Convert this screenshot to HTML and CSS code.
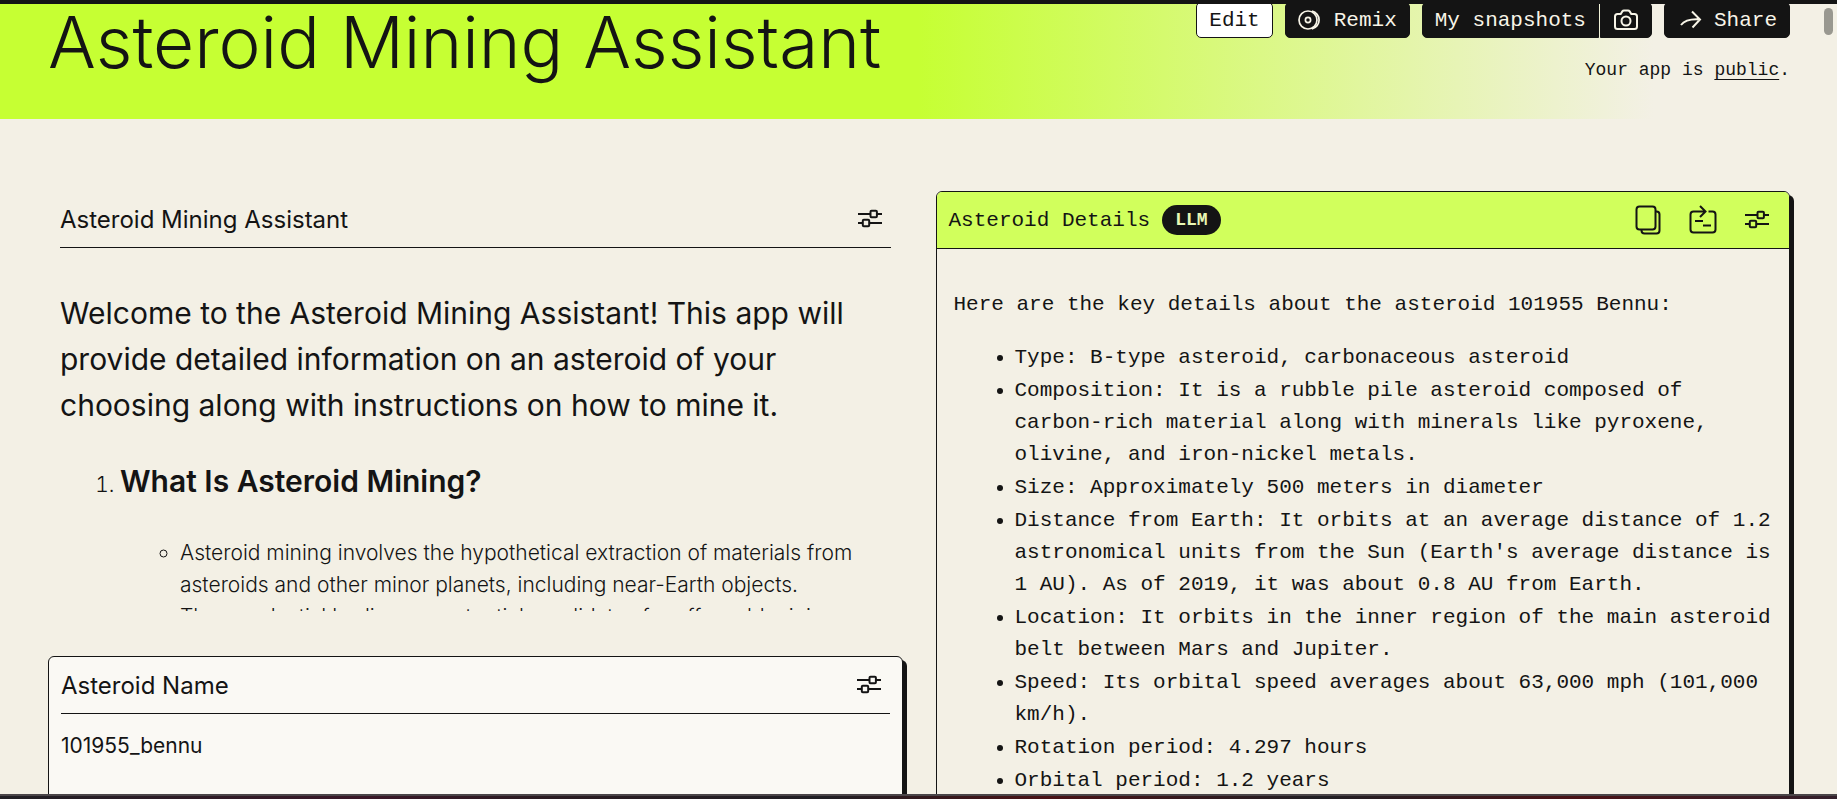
FILE: index.html
```html
<!DOCTYPE html>
<html lang="en">
<head>
    <meta charset="UTF-8">
    <meta name="viewport" content="width=device-width, initial-scale=1.0">
    <title>Asteroid Mining Assistant</title>
    <link rel="stylesheet" href="styles.css">
</head>
<body>
    <svg class="sprite" aria-hidden="true">
        <symbol id="sliders" viewBox="0 0 24 20">
            <path d="M0 5h12M19 5h5M0 14h5M11 14h13"/>
            <rect x="12.5" y="1.7" width="6.4" height="6.6" rx="1"/>
            <rect x="4.8" y="10.7" width="6.4" height="6.6" rx="1"/>
        </symbol>
    </svg>

    <div class="top-bar"></div>
    <div class="app">
        <header class="app-header">
            <h1>Asteroid Mining Assistant</h1>
            <div class="header-side">
                <div class="actions">
                    <button class="btn btn-light">Edit</button>
                    <button class="btn">
                        <svg class="thin" width="24" height="20" viewBox="0 0 24 20"><circle cx="10" cy="10" r="9"/><circle cx="10" cy="10" r="2.600"/><path d="M14 1.200a9 9 0 0 1 0 17.600"/></svg>
                        Remix
                    </button>
                    <div class="btn-group">
                        <button class="btn">My snapshots</button>
                        <button class="btn" aria-label="Take snapshot">
                            <svg width="24" height="22" viewBox="0 0 24 22"><path d="M3.500 5h3.200l1.600-2.600Q8.900 1.500 10 1.500h4q1.100 0 1.700.9L17.300 5h3.200Q23 5 23 7.500v10q0 2.500-2.500 2.500h-17Q1 20 1 17.500v-10Q1 5 3.500 5z"/><circle cx="12" cy="12" r="4.500"/></svg>
                        </button>
                    </div>
                    <button class="btn btn-share">
                        <svg width="22" height="20" viewBox="0 0 22 20"><path d="M1 15Q6 8.500 20 9.500M12 1.500l8 8-7.500 8"/></svg>
                        Share
                    </button>
                </div>
                <p class="visibility">Your app is <a href="#">public</a>.</p>
            </div>
        </header>

        <main class="columns">
            <div class="column">
                <section class="panel">
                    <div class="panel-header">
                        <h2>Asteroid Mining Assistant</h2>
                        <button class="icon-btn" aria-label="Settings"><svg width="24" height="20"><use href="#sliders"/></svg></button>
                    </div>
                    <div class="panel-body">
                        <p class="intro">Welcome to the Asteroid Mining Assistant! This app will provide detailed information on an asteroid of your choosing along with instructions on how to mine it.</p>
                        <ol>
                            <li>
                                <h3>What Is Asteroid Mining?</h3>
                                <ul>
                                    <li>Asteroid mining involves the hypothetical extraction of materials from asteroids and other minor planets, including near-Earth objects.</li>
                                    <li>These celestial bodies are potential candidates for off-world mining.</li>
                                </ul>
                            </li>
                        </ol>
                    </div>
                </section>

                <section class="card">
                    <div class="panel-header">
                        <h2><label for="asteroidName">Asteroid Name</label></h2>
                        <button class="icon-btn" aria-label="Settings"><svg width="24" height="20"><use href="#sliders"/></svg></button>
                    </div>
                    <input type="text" id="asteroidName" value="101955_bennu">
                </section>
            </div>

            <section class="details">
                <div class="details-header">
                    <h2>Asteroid Details</h2>
                    <span class="badge">LLM</span>
                    <div class="details-tools">
                        <button class="icon-btn" aria-label="Copy">
                            <svg width="26" height="30" viewBox="0 0 26 30"><rect x="1.500" y="1.500" width="19" height="23" rx="3"/><path d="M20.500 6.500h1q3 0 3 3v16q0 3-3 3H9.500q-3 0-3-3v-1"/></svg>
                        </button>
                        <button class="icon-btn" aria-label="Run step">
                            <svg width="28" height="30" viewBox="0 0 28 30"><path d="M19.500 6.500h4q3 0 3 3v15q0 3-3 3h-19q-3 0-3-3v-15q0-3 3-3h12M11 1l5.500 5.500L11 12M6 16h8M14 20.500h8"/></svg>
                        </button>
                        <button class="icon-btn" aria-label="Settings"><svg width="24" height="20"><use href="#sliders"/></svg></button>
                    </div>
                </div>
                <div class="details-body">
                    <p>Here are the key details about the asteroid 101955 Bennu:</p>
                    <ul>
                        <li>Type: B-type asteroid, carbonaceous asteroid</li>
                        <li>Composition: It is a rubble pile asteroid composed of carbon-rich material along with minerals like pyroxene, olivine, and iron-nickel metals.</li>
                        <li>Size: Approximately 500 meters in diameter</li>
                        <li>Distance from Earth: It orbits at an average distance of 1.2 astronomical units from the Sun (Earth's average distance is 1 AU). As of 2019, it was about 0.8 AU from Earth.</li>
                        <li>Location: It orbits in the inner region of the main asteroid belt between Mars and Jupiter.</li>
                        <li>Speed: Its orbital speed averages about 63,000 mph (101,000 km/h).</li>
                        <li>Rotation period: 4.297 hours</li>
                        <li>Orbital period: 1.2 years</li>
                    </ul>
                </div>
            </section>
        </main>
        <div class="scroll-thumb"></div>
    </div>
    <div class="bottom-bar"></div>
</body>
</html>
```

FILE: styles.css
```css
* {
    box-sizing: border-box;
}
body {
    margin: 0;
    height: 100vh;
    display: flex;
    flex-direction: column;
    overflow: hidden;
    font-family: Inter, sans-serif;
    font-size: 21px;
    color: #141414;
    background-color: #f3f0e5;
}
h1, h2, h3, p {
    margin: 0;
}
svg {
    display: block;
    fill: none;
    stroke: currentColor;
    stroke-width: 2;
}
svg.thin {
    stroke-width: 1.7;
}
.sprite {
    position: absolute;
    width: 0;
    height: 0;
}
button {
    font: inherit;
    color: inherit;
    cursor: pointer;
}
.top-bar {
    flex: none;
    height: 4px;
    background-color: #141414;
}
.bottom-bar {
    flex: none;
    height: 5px;
    border-top: 2px solid #4a4548;
    background: linear-gradient(90deg, #201f24, #3a1828 20%, #2a1c22 30%, #201f24 45%, #4a1216 57%, #201f24 72%, #4a1216 86%, #33202c);
}
.app {
    position: relative;
    flex: 1;
    min-height: 0;
    overflow: hidden;
}
.scroll-thumb {
    position: absolute;
    top: 4px;
    right: 4px;
    width: 9px;
    height: 27px;
    border-radius: 5px;
    background-color: #999890;
}

/* header */
.app-header {
    display: flex;
    justify-content: space-between;
    height: 115px;
    padding: 0 47px 0 48px;
    background: linear-gradient(90deg, #c6ff33 50%, #f3f0e5 90%);
}
.app-header h1 {
    font-size: 71px;
    font-weight: 300;
    line-height: 76px;
    white-space: nowrap;
}
.header-side {
    display: flex;
    flex-direction: column;
    align-items: flex-end;
    font-family: "Liberation Mono", monospace;
}
.actions {
    display: flex;
    gap: 12px;
    margin-top: -2px;
}
.btn {
    display: flex;
    align-items: center;
    gap: 12px;
    height: 36px;
    padding: 0 12px;
    border: 1px solid #141414;
    border-radius: 5px;
    font-size: 21px;
    color: #f8f5e8;
    background-color: #141414;
}
.btn-light {
    color: #141414;
    background-color: #fff;
}
.btn-share {
    padding-left: 15px;
}
.btn-group {
    display: flex;
    gap: 1px;
}
.btn-group .btn:first-child {
    border-radius: 5px 0 0 5px;
}
.btn-group .btn:last-child {
    padding: 0 13px;
    border-radius: 0 5px 5px 0;
}
.visibility {
    margin-top: 20px;
    font-size: 18px;
    line-height: 24px;
}
.visibility a {
    color: inherit;
    text-underline-offset: 4px;
}

/* two column layout */
.columns {
    display: grid;
    grid-template-columns: 1fr 1fr;
    gap: 33px;
    padding: 72px 47px 0 48px;
}
.column {
    display: flex;
    flex-direction: column;
    gap: 45px;
    min-width: 0;
}
.panel {
    padding: 0 12px;
}
.panel-header {
    display: flex;
    align-items: center;
    justify-content: space-between;
    height: 57px;
    padding-right: 9px;
    border-bottom: 1px solid #141414;
}
.panel-header h2 {
    font-size: 24px;
    font-weight: 400;
}
.icon-btn {
    padding: 0;
    border: none;
    background: none;
}
.panel-body {
    max-height: 363px;
    padding-top: 42px;
    overflow: hidden;
    font-weight: 300;
    line-height: 32px;
}
.intro {
    font-size: 30px;
    font-weight: 400;
    line-height: 46px;
}
.panel-body ol {
    margin: 30px 0 0;
    padding-left: 60px;
}
.panel-body ul {
    margin: 33px 0 0;
    padding-left: 60px;
}
.panel-body h3 {
    font-size: 30px;
    font-weight: 600;
    line-height: 46px;
}
.card {
    padding: 0 12px;
    border: 1px solid #141414;
    border-radius: 6px;
    background-color: #faf9f4;
    box-shadow: 4px 4px 0 #141414;
}
.card input {
    display: block;
    width: 100%;
    height: 62px;
    margin-bottom: 80px;
    padding: 0;
    border: none;
    outline: none;
    font: inherit;
    color: inherit;
    background: none;
}

/* LLM output */
.details {
    min-width: 0;
    border: 1px solid #141414;
    border-radius: 6px;
    font-family: "Liberation Mono", monospace;
    box-shadow: 4px 4px 0 #141414;
}
.details-header {
    display: flex;
    align-items: center;
    gap: 12px;
    height: 57px;
    padding: 0 20px 0 12px;
    border-bottom: 1px solid #141414;
    border-radius: 5px 5px 0 0;
    background-color: #d1ff5c;
}
.details-header h2 {
    font-size: 21px;
    font-weight: 400;
}
.badge {
    padding: 0 13px;
    border-radius: 15px;
    font-size: 18px;
    font-weight: 700;
    line-height: 30px;
    color: #e8f7b4;
    background-color: #141414;
}
.details-tools {
    display: flex;
    align-items: center;
    gap: 28px;
    margin-left: auto;
}
.details-body {
    padding: 40px 17px;
    line-height: 32px;
}
.details-body ul {
    margin: 21px 0 0;
    padding-left: 61px;
}
.details-body li {
    margin-bottom: 1px;
}
```
